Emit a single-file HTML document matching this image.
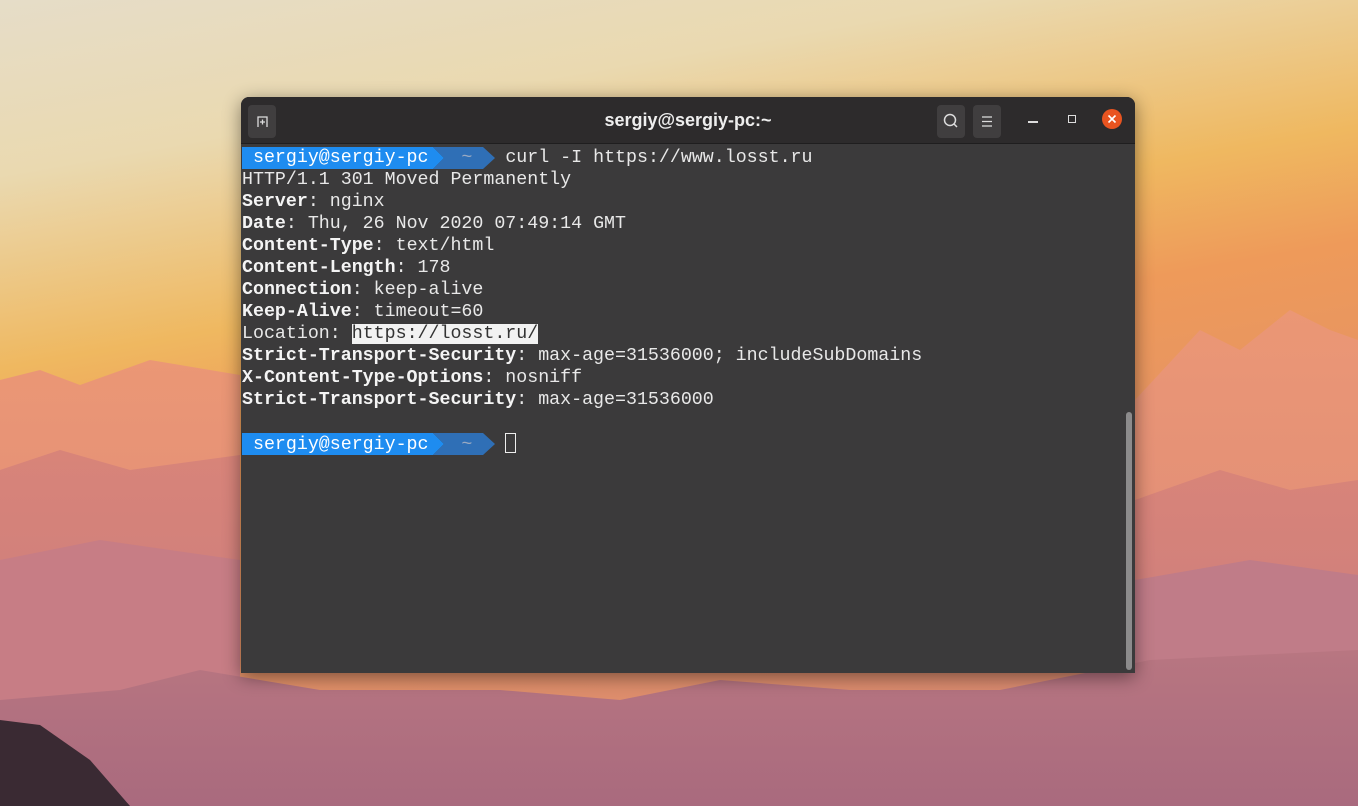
<!DOCTYPE html>
<html><head><meta charset="utf-8"><style>
html,body{margin:0;padding:0;width:1358px;height:806px;overflow:hidden;}
body{position:relative;font-family:"Liberation Sans",sans-serif;}
#bg{position:absolute;left:0;top:0;}
.win{position:absolute;left:241px;top:97px;width:894px;height:576px;background:#3b3a3b;border-radius:8px 8px 0 0;box-shadow:0 4px 18px rgba(0,0,0,.45);overflow:hidden;}
.tb{position:absolute;left:0;top:0;width:894px;height:46px;background:#2d2b2c;border-bottom:1px solid #1f1e1f;}
.btn{position:absolute;top:8px;width:28px;height:33px;background:#403e3f;border-radius:4px;}
.title{position:absolute;left:0;width:894px;top:13px;text-align:center;color:#eee;font-weight:bold;font-size:18px;}
.term{position:absolute;left:1px;top:50px;font-family:"Liberation Mono",monospace;font-size:18.3px;line-height:22px;color:#e8e8e8;white-space:pre;}
.term b{color:#f4f4f4;}
.sel{background:#f2f2f2;color:#333;}
.prompt{position:relative;height:22px;}
.sb{position:absolute;left:885px;top:315px;width:6px;height:258px;background:#8c8b8c;border-radius:3px;}
</style></head><body>
<svg id="bg" width="1358" height="806" viewBox="0 0 1358 806">
<defs>
<linearGradient id="sky" x1="0" y1="0" x2="0.3" y2="1">
<stop offset="0" stop-color="#e6ddc8"/><stop offset="0.2" stop-color="#ead9b0"/><stop offset="0.42" stop-color="#efb860"/><stop offset="0.55" stop-color="#ee9a5a"/><stop offset="1" stop-color="#d98a70"/>
</linearGradient>
<linearGradient id="m1" x1="0" y1="0" x2="0" y2="1"><stop offset="0" stop-color="#eb9775"/><stop offset="1" stop-color="#d9867a"/></linearGradient>
<linearGradient id="m2" x1="0" y1="0" x2="0" y2="1"><stop offset="0" stop-color="#d88479"/><stop offset="1" stop-color="#c57a80"/></linearGradient>
<linearGradient id="m3" x1="0" y1="0" x2="0" y2="1"><stop offset="0" stop-color="#b87681"/><stop offset="1" stop-color="#a96a7e"/></linearGradient>
</defs>
<rect width="1358" height="806" fill="url(#sky)"/>
<polygon fill="url(#m1)" points="0,380 40,370 80,385 150,360 240,375 240,806 0,806"/>
<polygon fill="url(#m1)" points="1135,400 1200,330 1240,350 1290,310 1330,330 1358,340 1358,806 1135,806"/>
<polygon fill="url(#m2)" points="0,470 60,450 130,470 240,455 240,806 0,806"/>
<polygon fill="url(#m2)" points="1135,500 1220,470 1290,490 1358,480 1358,806 1135,806"/>
<polygon fill="#c77d85" points="0,560 100,540 240,560 240,806 0,806"/>
<polygon fill="#c07c88" points="1135,580 1250,560 1358,575 1358,806 1135,806"/>
<polygon fill="url(#m3)" points="0,700 120,690 200,670 320,690 500,690 620,700 720,680 850,690 1000,690 1150,660 1358,650 1358,806 0,806"/>
<polygon fill="#3a2a33" points="0,720 40,725 90,760 130,806 0,806"/>
</svg>
<div class="win">
 <div class="tb">
  <div class="btn" style="left:7px;"><svg width="28" height="33"><path d="M10 22 V12 H19 V22 M12 17 H17 M14.5 14.5 V19.5" stroke="#ddd" stroke-width="1.3" fill="none"/></svg></div>
  <div class="title">sergiy@sergiy-pc:~</div>
  <div class="btn" style="left:696px;"><svg width="28" height="33"><circle cx="13" cy="15" r="5.5" stroke="#ddd" stroke-width="1.5" fill="none"/><path d="M17 19 L20 22" stroke="#ddd" stroke-width="1.5"/></svg></div>
  <div class="btn" style="left:732px;"><svg width="28" height="33"><path d="M9 12 H19 M9 16.5 H19 M9 21 H19" stroke="#ddd" stroke-width="1.3"/></svg></div>
  <div style="position:absolute;left:787px;top:24px;width:10px;height:1.5px;background:#ddd;"></div>
  <div style="position:absolute;left:827px;top:18px;width:6px;height:6px;border:1.5px solid #ddd;"></div>
  <div style="position:absolute;left:861px;top:12px;width:20px;height:20px;border-radius:50%;background:#e95420;"><svg width="20" height="20"><path d="M6.5 6.5 L13.5 13.5 M13.5 6.5 L6.5 13.5" stroke="#fff" stroke-width="1.6"/></svg></div>
 </div>
 <div class="term"><div class="prompt"><svg style="position:absolute;left:0;top:0" width="260" height="22"><polygon points="0,0 191,0 202,11 191,22 0,22" fill="#1e8cf0"/><polygon points="191,0 241,0 253,11 241,22 191,22 202,11" fill="#2f6fb6"/></svg><span style="position:relative;color:#fff"> sergiy@sergiy-pc   <span style="color:#98a9c2">~</span>   </span>curl -I https://www.losst.ru</div>HTTP/1.1 301 Moved Permanently
<b>Server</b>: nginx
<b>Date</b>: Thu, 26 Nov 2020 07:49:14 GMT
<b>Content-Type</b>: text/html
<b>Content-Length</b>: 178
<b>Connection</b>: keep-alive
<b>Keep-Alive</b>: timeout=60
Location: <span class="sel">https://losst.ru/</span>
<b>Strict-Transport-Security</b>: max-age=31536000; includeSubDomains
<b>X-Content-Type-Options</b>: nosniff
<b>Strict-Transport-Security</b>: max-age=31536000

<div class="prompt"><svg style="position:absolute;left:0;top:0" width="260" height="22"><polygon points="0,0 191,0 202,11 191,22 0,22" fill="#1e8cf0"/><polygon points="191,0 241,0 253,11 241,22 191,22 202,11" fill="#2f6fb6"/></svg><span style="position:relative;color:#fff"> sergiy@sergiy-pc   <span style="color:#98a9c2">~</span>   </span><span style="display:inline-block;width:11px;height:20px;border:1px solid #eee;box-sizing:border-box;vertical-align:-4px;"></span></div></div>
 <div class="sb"></div>
</div>
</body></html>
